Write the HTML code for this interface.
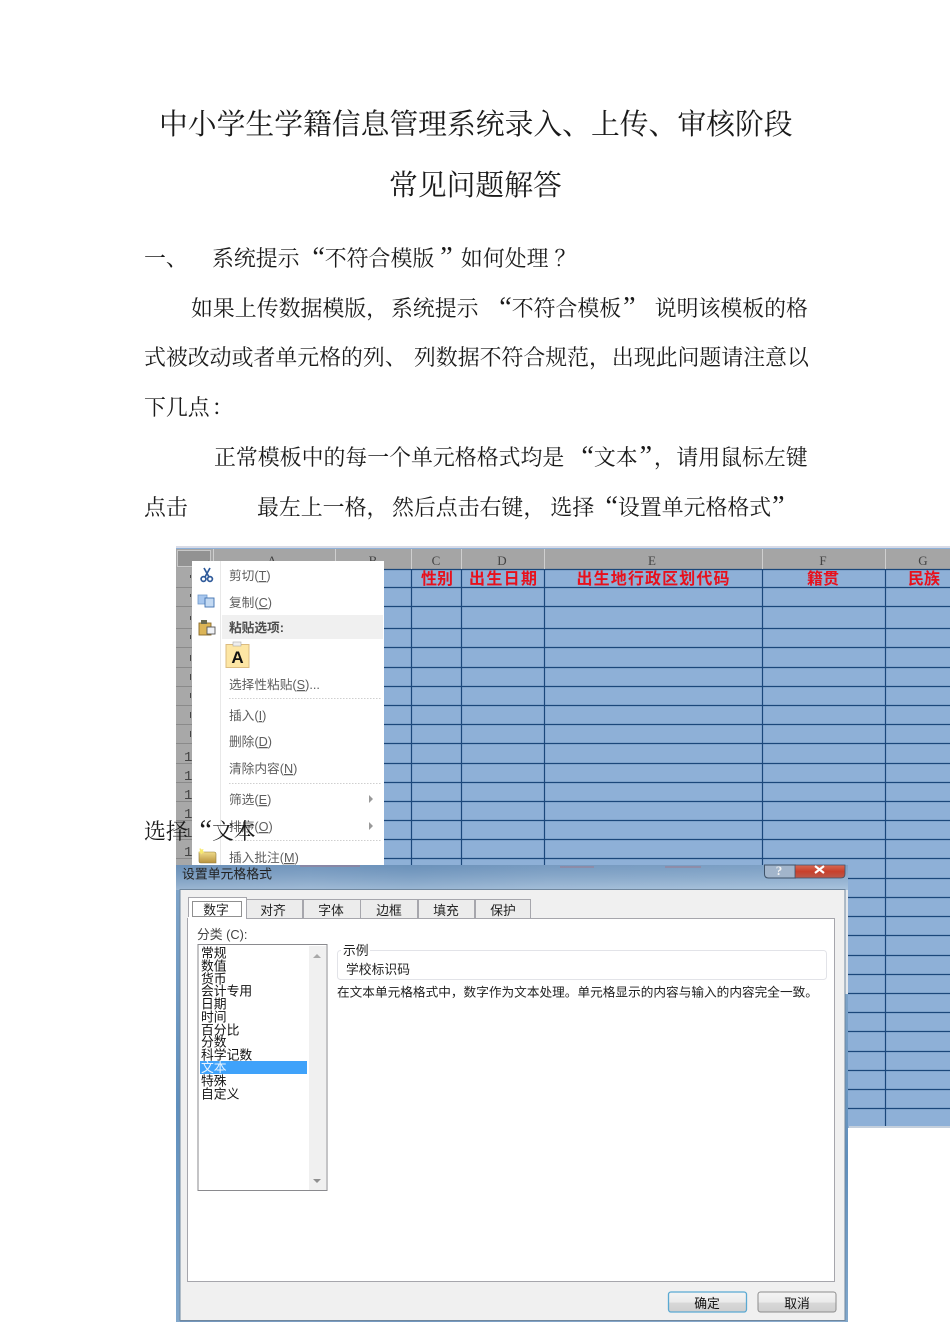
<!DOCTYPE html>
<html lang="zh-CN"><head><meta charset="utf-8"><title>中小学生学籍信息管理系统</title>
<style>
html,body{margin:0;padding:0;background:#fff}
#p{position:relative;width:950px;height:1344px;overflow:hidden;background:#fff;font-family:"Liberation Serif","Noto Serif CJK SC",serif;color:#1a1a1a}
.t{position:absolute;white-space:nowrap;font-family:"Noto Serif CJK SC",serif;line-height:30px;height:30px;font-size:21.9px}
.h{font-size:28.8px;line-height:40px;height:40px}
svg{position:absolute;left:0;top:0;filter:blur(.35px)}
.s{font-family:"Liberation Sans","Noto Sans CJK SC",sans-serif}
i{font-style:normal;display:inline-block;box-sizing:border-box}
.o,.c{line-height:0;font-family:"Liberation Serif",serif;font-size:28px}
.o{text-align:right}
.c{text-align:left}
</style></head><body><div id="p">
<div class="t h" style="left:159px;top:103px">中小学生学籍信息管理系统录入、上传、审核阶段</div>
<div class="t h" style="left:389px;top:164px">常见问题解答</div>
<div class="t" style="left:144px;top:243px">一、</div>
<div class="t" style="left:212px;top:243px">系统提示<i class="o" style="width:25.2px">“</i>不符合模版<i class="c" style="width:26.7px;padding-left:6px">”</i>如何处理<i style="margin-left:6px">？</i></div>
<div class="t" style="left:191px;top:293px">如果上传数据模版<i style="width:24.8px">，</i>系统提示</div>
<div class="t" style="left:490px;top:293px"><i class="o" style="width:21.7px">“</i>不符合模板<i class="c" style="padding-left:2px">”</i></div>
<div class="t" style="left:654.7px;top:293px">说明该模板的格</div>
<div class="t" style="left:144px;top:342px">式被改动或者单元格的列<i style="width:29.1px">、</i>列数据不符合规范<i style="width:22.8px">，</i>出现此问题请注意以</div>
<div class="t" style="left:144px;top:392px">下几点<i style="margin-left:2px">：</i></div>
<div class="t" style="left:214px;top:442px">正常模板中的每一个单元格格式均是<i class="o" style="width:29.6px">“</i>文本<i class="c" style="width:16.2px;padding-left:2px">”</i><i style="width:22.5px">，</i>请用鼠标左键</div>
<div class="t" style="left:144px;top:492px">点击</div>
<div class="t" style="left:257px;top:492px">最左上一格<i style="width:25.5px">，</i>然后点击右键<i style="width:27.1px">，</i>选择<i class="o" style="width:23.7px">“</i>设置单元格格式<i class="c" style="padding-left:1px">”</i></div>

<svg width="950" height="1344" viewBox="0 0 950 1344" xmlns="http://www.w3.org/2000/svg">
<defs>
<linearGradient id="tb" x1="0" x2="1" y1="0" y2="0"><stop offset="0" stop-color="#7296bc"/><stop offset=".2" stop-color="#7d9fc4"/><stop offset=".35" stop-color="#7197bf"/><stop offset=".55" stop-color="#82a4c8"/><stop offset=".75" stop-color="#86a8cb"/><stop offset="1" stop-color="#8daed0"/></linearGradient>
<linearGradient id="tv" x1="0" x2="0" y1="0" y2="1"><stop offset="0" stop-color="#5d84ae" stop-opacity=".3"/><stop offset="1" stop-color="#d0e0ee" stop-opacity=".45"/></linearGradient>
<linearGradient id="b" x1="0" x2="0" y1="0" y2="1"><stop offset="0" stop-color="#f4f4f4"/><stop offset=".5" stop-color="#ebebeb"/><stop offset=".55" stop-color="#d8d8d8"/><stop offset="1" stop-color="#cfcfcf"/></linearGradient>
<linearGradient id="c" x1="0" x2="0" y1="0" y2="1"><stop offset="0" stop-color="#d86a55"/><stop offset=".5" stop-color="#c8402c"/><stop offset="1" stop-color="#b85a4c"/></linearGradient>
<linearGradient id="ls" x1="0" x2="0" y1="0" y2="1"><stop offset="0" stop-color="#7da3c8"/><stop offset=".5" stop-color="#5f8fbd"/><stop offset="1" stop-color="#82a8cc"/></linearGradient>
<linearGradient id="fd" x1="0" x2="0" y1="0" y2="1"><stop offset="0" stop-color="#f0dc8a"/><stop offset="1" stop-color="#b8923e"/></linearGradient>
</defs>

<!-- spreadsheet -->
<rect x="176" y="546" width="774" height="2" fill="#d9dbe6"/>
<rect x="176" y="548" width="774" height="580" fill="#8eb0d7"/>
<rect x="849" y="1126" width="101" height="2" fill="#c4cfdc"/>
<rect x="176" y="549" width="774" height="20" fill="#a5a5a5"/>
<rect x="176" y="568" width="37" height="320" fill="#a8a8a8"/>
<rect x="177.5" y="550.5" width="33" height="16" fill="#929292" stroke="#c8c8c8"/>
<path d="M203 566l6-6v6z" fill="#777"/>
<g fill="none" stroke="#1b477a" stroke-width="1.2">
<path d="M213 569.5H950M213 587.5H950M213 606.5H950M213 628.5H950M213 647.5H950M213 667.5H950M213 686.5H950M213 705.5H950M213 724.5H950M213 743.5H950M213 763.5H950M213 782.5H950M213 801.5H950M213 820.5H950M213 839.5H950M213 858.5H950M213 878.5H950M213 897.5H950M213 916.5H950M213 935.5H950M213 955.5H950M213 974.5H950M213 993.5H950M213 1012.5H950M213 1031.5H950M213 1051.5H950M213 1070.5H950M213 1089.5H950M213 1108.5H950"/>
<path d="M411.5 569V870M461.5 569V870M544.5 569V870M762.5 569V870M885.5 569V1126"/>
</g>
<g fill="none" stroke="#8a8a8a"><path d="M176 587.5H213M176 606.5H213M176 628.5H213M176 647.5H213M176 667.5H213M176 686.5H213M176 705.5H213M176 724.5H213M176 743.5H213M176 763.5H213M176 782.5H213M176 801.5H213M176 820.5H213M176 839.5H213M176 858.5H213"/>
<path d="M213.5 549V570M335.5 549V569M411.5 549V569M461.5 549V569M544.5 549V569M762.5 549V569M885.5 549V569" stroke="#cfcfcf"/></g>
<path d="M190.5 575v3M190.5 594v3M190.5 616v4M190.5 635v4M190.5 655v6M190.5 674v6M190.5 693v5M190.5 712v6M190.5 731v6" stroke="#444" fill="none"/>
<g font-family="'Liberation Serif',serif" font-size="13" fill="#444" text-anchor="middle">
<text x="272" y="565">A</text><text x="373" y="565">B</text><text x="436" y="565">C</text><text x="502" y="565">D</text><text x="652" y="565">E</text><text x="823" y="565">F</text><text x="923" y="565">G</text>
</g>
<g font-family="'Liberation Mono',monospace" font-size="14" fill="#444">
<text x="184" y="761">1</text><text x="184" y="780">1</text><text x="184" y="799">1</text><text x="184" y="818">1</text><text x="184" y="837">1</text><text x="184" y="856">1</text>
</g>
<g font-family="'Noto Sans CJK SC',sans-serif" font-size="16" font-weight="700" fill="#e8101c" text-anchor="middle">
<text x="437" y="584">性别</text>
<text x="503" y="584" textLength="68">出生日期</text>
<text x="653" y="584" textLength="153">出生地行政区划代码</text>
<text x="823" y="584">籍贯</text>
<text x="924" y="584">民族</text>
</g>

<!-- context menu -->
<rect x="192" y="561" width="192" height="305" fill="#fff"/>
<rect x="220" y="561" width="1" height="305" fill="#e8e8e8"/>
<rect x="222" y="615" width="161" height="24" fill="#f0f0f0"/>
<!-- scissors -->
<g fill="none" stroke="#2f5a9a" stroke-width="1.7"><path d="M204 568l5 9M210 568l-5 9"/><circle cx="203.5" cy="579" r="2.4"/><circle cx="210" cy="579" r="2.4"/></g>
<!-- copy -->
<rect x="198" y="595" width="9" height="9" fill="#a6c6ee" stroke="#6f98cc" stroke-width=".8"/>
<rect x="205" y="598" width="9" height="9" fill="#c3d9f2" stroke="#3f70b0" stroke-width=".9"/>
<!-- paste -->
<rect x="199" y="623" width="12" height="12" fill="#dcb557" stroke="#8a6a2a" stroke-width=".9"/>
<rect x="201" y="620" width="6" height="4" fill="#6a6a50"/>
<rect x="207" y="627" width="8" height="7" fill="#f0f2f6" stroke="#555" stroke-width=".9"/>
<!-- A paste -->
<rect x="226" y="644.5" width="23" height="23" fill="#fde6a4" stroke="#dcbc80"/>
<rect x="233" y="642" width="8" height="4" fill="#eee" stroke="#aaa" stroke-width=".6"/>
<text x="237.5" y="663" text-anchor="middle" font-family="'Liberation Sans',sans-serif" font-weight="700" font-size="17" fill="#111">A</text>
<!-- folder -->
<path d="M199 852h15q2 0 2 2v9h-15q-2 0-2-2z" fill="url(#fd)" stroke="#8f7a3a" stroke-width=".6"/>
<path d="M200 848l1.5 1.5 2-.5-.5 2 1.5 1.5-2 .2-1 1.8-1-1.8-2-.2 1.5-1.5-.5-2z" fill="#f7e96e"/>
<g class="s" font-size="12.7" fill="#5e5e5e">
<text x="229" y="580">剪切(<tspan text-decoration="underline">T</tspan>)</text>
<text x="229" y="607">复制(<tspan text-decoration="underline">C</tspan>)</text>
<text x="229" y="632" font-weight="700" fill="#4e4e4e">粘贴选项:</text>
<text x="229" y="689">选择性粘贴(<tspan text-decoration="underline">S</tspan>)...</text>
<text x="229" y="720">插入(<tspan text-decoration="underline">I</tspan>)</text>
<text x="229" y="746">删除(<tspan text-decoration="underline">D</tspan>)</text>
<text x="229" y="773">清除内容(<tspan text-decoration="underline">N</tspan>)</text>
<text x="229" y="804">筛选(<tspan text-decoration="underline">E</tspan>)</text>
<text x="229" y="831">排序(<tspan text-decoration="underline">O</tspan>)</text>
<text x="229" y="862">插入批注(<tspan text-decoration="underline">M</tspan>)</text>
</g>
<path d="M229 698.5H382M229 783.5H382M229 840.5H382" stroke="#cfcfcf" stroke-dasharray="1.5 1.5"/>
<path d="M369 795l4 4-4 4zM369 822l4 4-4 4z" fill="#999"/>

<!-- dialog -->
<rect x="176" y="865" width="672" height="457" fill="url(#tb)"/>
<rect x="176" y="865" width="672" height="25" fill="url(#tv)"/>
<rect x="176" y="890" width="4" height="432" fill="url(#ls)"/>
<rect x="845" y="994" width="3" height="328" fill="url(#ls)"/>
<rect x="845" y="890" width="3" height="104" fill="#e4e8ec"/>
<g fill="#b06a78" opacity=".35"><rect x="300" y="865" width="60" height="2"/><rect x="560" y="866" width="34" height="2"/><rect x="665" y="866" width="36" height="2"/></g>
<rect x="180" y="889.5" width="665" height="431" fill="#f0f0f0" stroke="#70879e"/>
<rect x="187.5" y="918.5" width="647" height="363" fill="#fff" stroke="#a6a6ac"/>
<text x="182" y="878.5" class="s" font-size="12.85" fill="#222">设置单元格格式</text>
<!-- caption buttons -->
<path d="M764.5 865v9q0 4 4 4h27v-13z" fill="#a2b5cb" stroke="#3e5269"/>
<path d="M795 865v13h46q4 0 4-4v-9z" fill="url(#c)" stroke="#3e5269" stroke-width=".8"/>
<text x="779" y="875" text-anchor="middle" font-family="'Liberation Serif',serif" font-weight="700" font-size="13" fill="#f2f2f2">?</text>
<path d="M815 866l9 7M824 866l-9 7" stroke="#fff" stroke-width="2.2"/>
<!-- tabs -->
<path d="M188.5 918.5V897.5H246.5V918.5" fill="#fff" stroke="#a6a6ac"/>
<g fill="#ececec" stroke="#a6a6ac"><rect x="246.5" y="899.5" width="56" height="19"/><rect x="303.5" y="899.5" width="57" height="19"/><rect x="360.5" y="899.5" width="57" height="19"/><rect x="418.5" y="899.5" width="56" height="19"/><rect x="475.5" y="899.5" width="55" height="19"/></g>
<rect x="192.5" y="901.5" width="49" height="15" fill="none" stroke="#222" stroke-dasharray="1 1"/>
<rect x="188" y="917" width="58" height="3" fill="#fff"/>
<g class="s" font-size="12.8" fill="#222" text-anchor="middle">
<text x="216" y="914.5">数字</text><text x="273" y="915">对齐</text><text x="331" y="915">字体</text><text x="389" y="915">边框</text><text x="446" y="915">填充</text><text x="503" y="915">保护</text>
</g>
<text x="197" y="939" class="s" font-size="12.8" fill="#444">分类 (C):</text>
<!-- list -->
<rect x="198" y="944.5" width="129" height="246" fill="#fff" stroke="#8a8a8e"/>
<rect x="309" y="946" width="17" height="244" fill="#f0f0f0"/>
<path d="M313 958l4-4 4 4z" fill="#a8a8a8"/><path d="M313 1179h8l-4 4z" fill="#909090"/>
<rect x="200" y="1061" width="107" height="13" fill="#3fa2fa"/>
<g class="s" font-size="12.8" fill="#111">
<text x="201" y="957.5">常规</text><text x="201" y="970.5">数值</text><text x="201" y="983.5">货币</text><text x="201" y="995.5">会计专用</text><text x="201" y="1008.5">日期</text><text x="201" y="1021.5">时间</text><text x="201" y="1034.5">百分比</text><text x="201" y="1046.5">分数</text><text x="201" y="1059.5">科学记数</text>
<text x="201" y="1072" fill="#e8f4ff">文本</text>
<text x="201" y="1085.5">特殊</text><text x="201" y="1098.5">自定义</text>
</g>
<!-- sample -->
<rect x="337.5" y="950.5" width="489" height="29" rx="3" fill="#fff" stroke="#e2e3e8"/>
<rect x="341" y="945" width="29" height="10" fill="#fff"/>
<g class="s" font-size="12.8" fill="#222">
<text x="343" y="955">示例</text>
<text x="346" y="974">学校标识码</text>
<text x="337" y="996.5" font-size="12.66">在文本单元格格式中，数字作为文本处理。单元格显示的内容与输入的内容完全一致。</text>
</g>
<!-- buttons -->
<rect x="668.5" y="1292" width="78" height="20" rx="2.5" fill="url(#b)" stroke="#5aa9d2" stroke-width="1.3"/>
<rect x="758" y="1292" width="78" height="20" rx="2.5" fill="url(#b)" stroke="#8c8c8c"/>
<g class="s" font-size="12.8" fill="#111" text-anchor="middle"><text x="707" y="1308">确定</text><text x="797" y="1308">取消</text></g>
</svg>
<div class="t" style="left:144px;top:816px">选择<i class="o" style="width:24.2px">“</i>文本</div>
</div></body></html>
